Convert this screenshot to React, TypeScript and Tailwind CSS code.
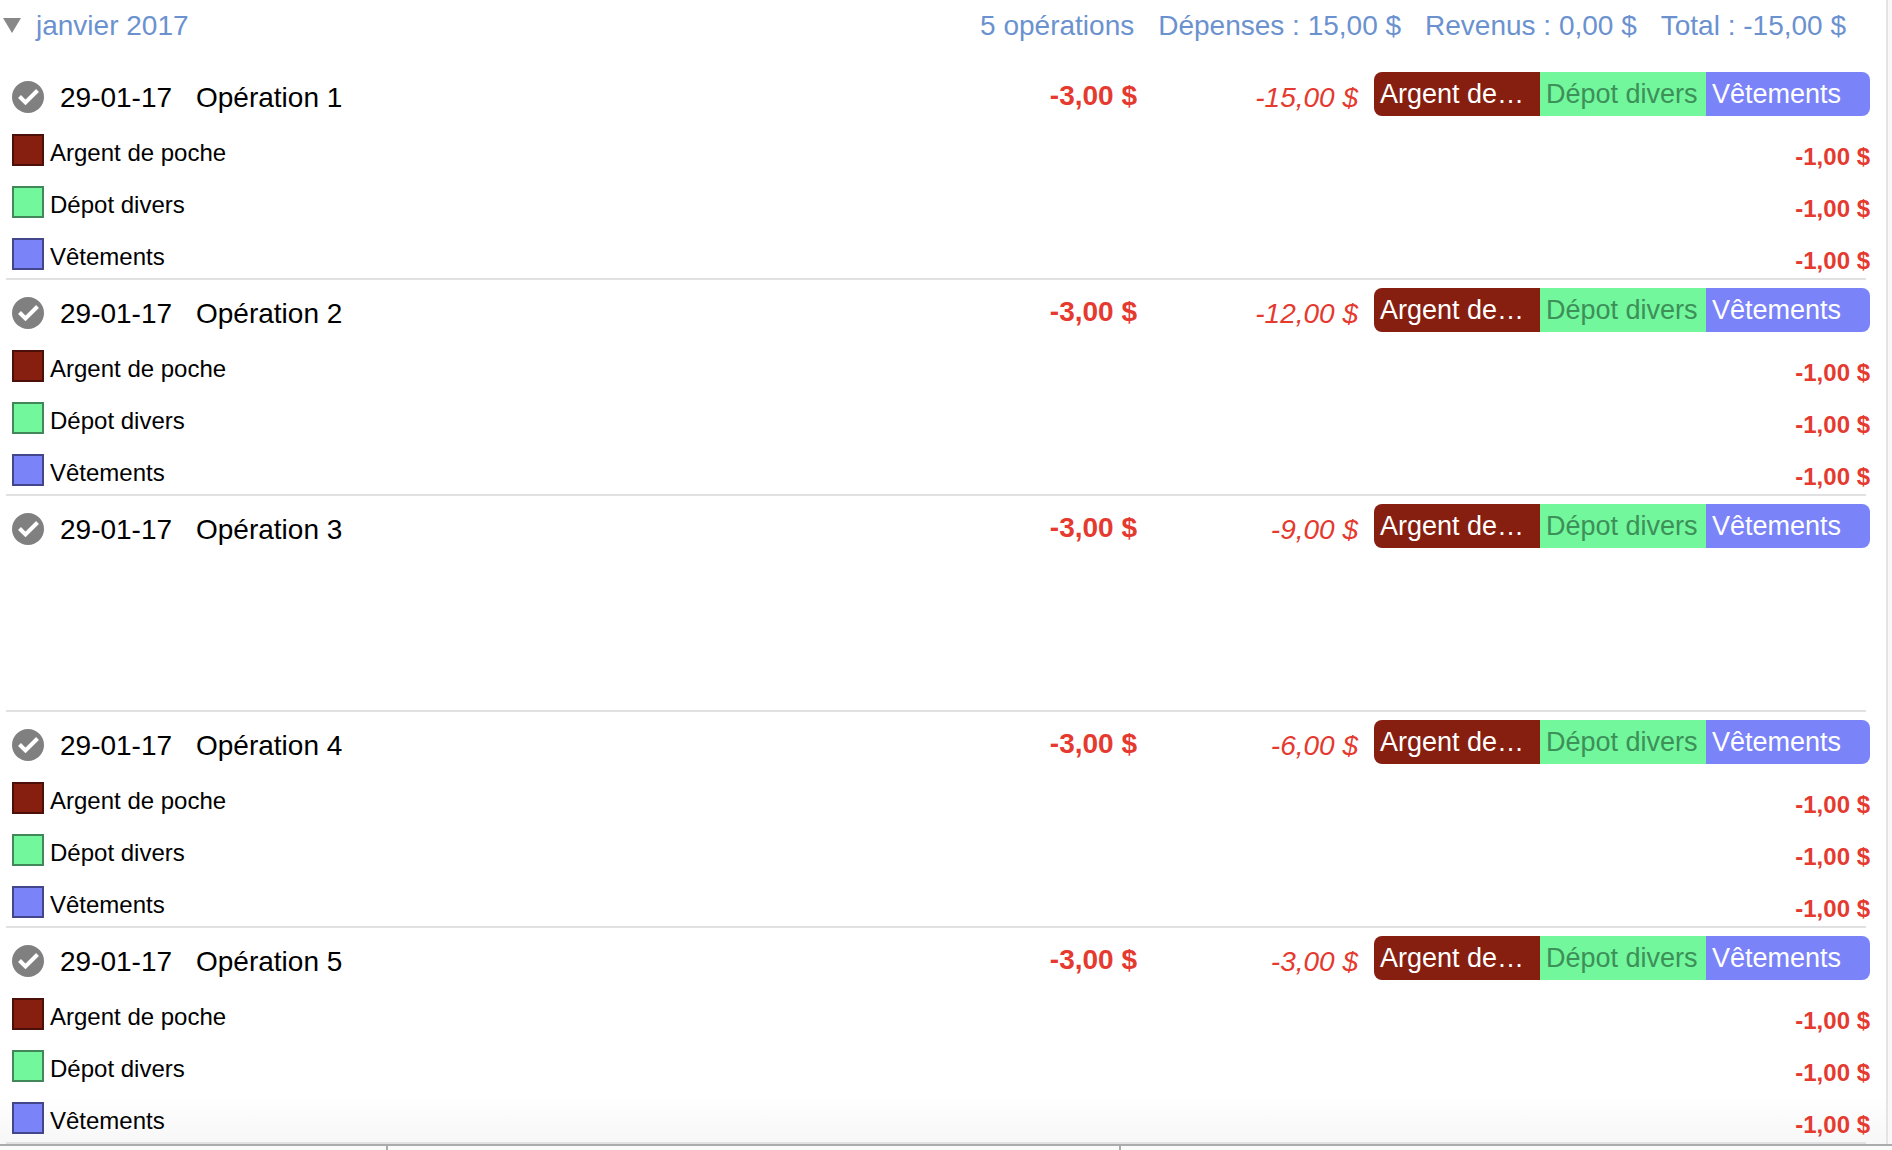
import { useState } from "react";

type Category = {
  name: string;
  short: string;
  swatch: string;
  tag: string;
};

const categories: Category[] = [
  {
    name: "Argent de poche",
    short: "Argent de…",
    swatch: "bg-[#871f11] border-[#4d0f0a]",
    tag: "bg-[#871f11] text-white",
  },
  {
    name: "Dépot divers",
    short: "Dépot divers",
    swatch: "bg-[#73f79d] border-[#41875a]",
    tag: "bg-[#73f79d] text-[#3c9058]",
  },
  {
    name: "Vêtements",
    short: "Vêtements",
    swatch: "bg-[#7b83f9] border-[#43478a]",
    tag: "bg-[#7b83f9] text-white",
  },
];

const operations = [
  { id: 1, title: "Opération 1", balance: "-15,00 $", detailed: true },
  { id: 2, title: "Opération 2", balance: "-12,00 $", detailed: true },
  { id: 3, title: "Opération 3", balance: "-9,00 $", detailed: false },
  { id: 4, title: "Opération 4", balance: "-6,00 $", detailed: true },
  { id: 5, title: "Opération 5", balance: "-3,00 $", detailed: true },
];

function CheckMark({ label }: { label: string }) {
  return (
    <label className="grid size-8">
      <input
        type="checkbox"
        defaultChecked
        aria-label={label}
        className="peer col-start-1 row-start-1 size-8 appearance-none rounded-full bg-[#808080]"
      />
      <svg
        viewBox="0 0 32 32"
        className="pointer-events-none invisible col-start-1 row-start-1 size-8 peer-checked:visible"
      >
        <path
          d="M7.5 15.5 L13.5 21.5 L25.5 9.5"
          fill="none"
          stroke="#fff"
          strokeWidth="4"
        />
      </svg>
    </label>
  );
}

function Operation({ op }: { op: (typeof operations)[number] }) {
  return (
    <tbody>
      <tr className="h-[58px] align-top">
        <td className="pt-[17px] pl-1.5">
          <CheckMark label={`Pointer ${op.title}`} />
        </td>
        <td className="pt-[18px]">29-01-17</td>
        <td className="pt-[18px]">{op.title}</td>
        <td className="pt-4 text-right font-bold text-[#e53a2f]">-3,00 $</td>
        <td className="pt-[18px] text-right text-[#e53a2f] italic">
          {op.balance}
        </td>
        <td className="pt-2 pl-4">
          <div className="grid h-11 grid-cols-[166fr_166fr_164fr] overflow-hidden rounded-lg text-[27px] leading-[45px]">
            {categories.map((c) => (
              <span key={c.name} className={`truncate pl-1.5 ${c.tag}`}>
                {c.short}
              </span>
            ))}
          </div>
        </td>
      </tr>

      {op.detailed ? (
        categories.map((c) => (
          <tr
            key={c.name}
            className="h-[52px] align-top text-[24px] leading-[28px]"
          >
            <td colSpan={5} className="pt-3 pl-1.5">
              <div className="flex gap-1.5">
                <span className={`size-8 shrink-0 border-2 ${c.swatch}`} />
                <span className="pt-[5px]">{c.name}</span>
              </div>
            </td>
            <td className="pt-[21px] text-right font-bold text-[#e53a2f]">
              -1,00 $
            </td>
          </tr>
        ))
      ) : (
        <tr className="h-[156px]">
          <td colSpan={6} />
        </tr>
      )}

      {/* separator */}
      <tr aria-hidden="true">
        <td colSpan={6} className="p-0">
          <div className="mr-1 h-0.5 bg-[#e1e1e1]" />
        </td>
      </tr>
    </tbody>
  );
}

export default function App() {
  const [open, setOpen] = useState(true);

  return (
    <div className="flex min-h-screen flex-col overflow-hidden bg-white font-['Liberation_Sans',Arial,sans-serif] text-[28px] leading-[32px] text-black">
      <div className="flex">
        <main className="min-w-0 flex-1 bg-[linear-gradient(to_top,#f7f7f7,#ffffff_50px)] pr-4 pl-1.5">
          <header className="-ml-[3px] flex h-16 items-start justify-between pt-2.5 pr-6 text-[#6b92cf]">
            <button
              type="button"
              aria-expanded={open}
              onClick={() => setOpen(!open)}
              className="flex gap-[15px]"
            >
              <svg
                viewBox="0 0 18 15"
                className={`mt-2 h-[15px] w-[18px] ${open ? "" : "-rotate-90"}`}
              >
                <path d="M0 0H18L9 15Z" fill="#888" />
              </svg>
              <span>janvier 2017</span>
            </button>
            <div className="flex gap-6 whitespace-nowrap">
              <span>5 opérations</span>
              <span>Dépenses : 15,00 $</span>
              <span>Revenus : 0,00 $</span>
              <span>Total : -15,00 $</span>
            </div>
          </header>

          {open && (
            <table className="w-full table-fixed">
              <colgroup>
                <col className="w-[54px]" />
                <col className="w-[136px]" />
                <col />
                <col className="w-[160px]" />
                <col className="w-[221px]" />
                <col className="w-[512px]" />
              </colgroup>
              {operations.map((op) => (
                <Operation key={op.id} op={op} />
              ))}
            </table>
          )}
        </main>
        <div className="w-1.5 border-l-2 border-[#e4e4e4] bg-[#f8f8f8]" />
      </div>

      <footer className="flex min-h-1.5 flex-1 border-t-2 border-[#acacac] bg-[#fafafa]">
        <div className="w-[388px] border-r-2 border-[#acacac]" />
        <div className="w-[733px] border-r-2 border-[#acacac]" />
      </footer>
    </div>
  );
}
